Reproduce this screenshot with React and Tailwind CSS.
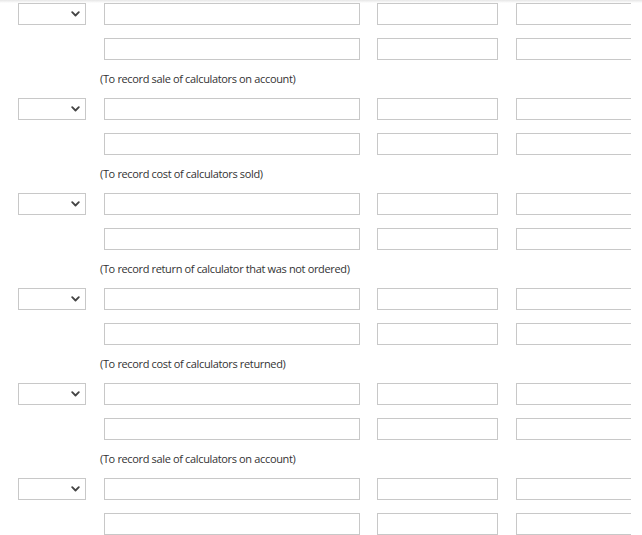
import React from "react";

const notes = [
  "(To record sale of calculators on account)",
  "(To record cost of calculators sold)",
  "(To record return of calculator that was not ordered)",
  "(To record cost of calculators returned)",
  "(To record sale of calculators on account)",
  null,
];

function Chevron() {
  return (
    <svg width="9" height="6" viewBox="0 0 9 6" fill="none" stroke="#444" strokeWidth="1.8" strokeLinecap="round" strokeLinejoin="round">
      <polyline points="1.2 1.2 4.5 4.5 7.8 1.2" />
    </svg>
  );
}

function Box({ w }) {
  return <div className={`h-[22px] shrink-0 border border-[#c8c8c8] bg-white ${w}`} />;
}

function Row({ withSelect }) {
  return (
    <div className="flex items-center h-[22px]">
      {withSelect ? (
        <div className="w-[68px] h-[22px] shrink-0 border border-[#c8c8c8] bg-white flex items-center justify-end pr-[5px]">
          <Chevron />
        </div>
      ) : (
        <div className="w-[68px] shrink-0" />
      )}
      <div className="w-[18px] shrink-0" />
      <Box w="w-[256px]" />
      <div className="w-[17px] shrink-0" />
      <Box w="w-[121px]" />
      <div className="w-[18px] shrink-0" />
      <Box w="w-[140px]" />
    </div>
  );
}

export default function App() {
  return (
    <div className="relative w-[642px] h-[535px] bg-white overflow-hidden" style={{ fontFamily: "'Open Sans', 'Liberation Sans', sans-serif" }}>
      <div className="absolute top-0 left-0 right-0 h-[3px] bg-gradient-to-b from-[#e6e6e6] to-white" />
      <div className="w-[631px] overflow-hidden pl-[18px] pt-[3px]">
        {notes.map((note, i) => (
          <div key={i} className="flex flex-col h-[95px]">
            <Row withSelect />
            <div className="h-[13px]" />
            <Row />
            {note && (
              <p className="mt-[10px] ml-[82px] text-[11px] leading-[17px] text-[#333] tracking-[-0.35px]">
                {note}
              </p>
            )}
          </div>
        ))}
      </div>
    </div>
  );
}
